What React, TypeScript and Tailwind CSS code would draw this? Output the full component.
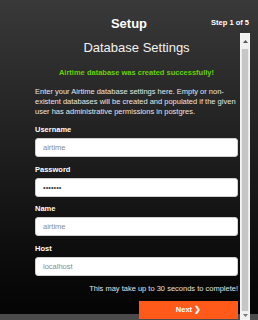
import React from "react";

const fields = [
  { label: "Username", type: "text", placeholder: "airtime" },
  { label: "Password", type: "password", value: "airtime" },
  { label: "Name", type: "text", placeholder: "airtime" },
  { label: "Host", type: "text", placeholder: "localhost" },
];

export default function App() {
  return (
    <div className="relative w-[258px] h-[320px] overflow-hidden bg-gradient-to-b from-[#393939] via-[#1d1d1d] to-[#040404] font-['Liberation_Sans',Arial,sans-serif] text-white">
      {/* page footer strip behind the dialog */}
      <div className="absolute inset-x-0 bottom-0 h-[6px] bg-[#4b4b4b]" />

      {/* header */}
      <div className="relative h-[33px] pt-[15.5px]">
        <div className="grid grid-cols-[1fr_auto_1fr] items-center">
          <div />
          <h1 className="text-[13px] leading-[15px] font-bold">Setup</h1>
          <div className="flex justify-end pr-[9px]">
            <span className="text-[7.5px] leading-[10px] font-bold">Step 1 of 5</span>
          </div>
        </div>
      </div>

      <div className="relative flex h-[287px]">
        {/* scrolling content */}
        <div className="w-[240px] pl-[35px] pr-[2px] overflow-hidden">
          <h2 className="pt-[6.5px] text-center text-[13px] leading-[16px] text-[#f2f2f2]">
            Database Settings
          </h2>
          <p className="mt-[12.5px] text-center text-[7.5px] leading-[10px] font-bold text-[#66d000]">
            Airtime database was created successfully!
          </p>
          <p className="mt-[9px] text-[7.5px] leading-[10px] text-[#e6e6e6]">
            Enter your Airtime database settings here. Empty or non-existent databases will be created and
            populated if the given user has administrative permissions in postgres.
          </p>

          <div className="mt-[8px] flex flex-col gap-[7.5px]">
            {fields.map((f) => (
              <label key={f.label} className="flex flex-col">
                <span className="mb-[3px] text-[7.5px] leading-[10px] font-bold">{f.label}</span>
                <input
                  type={f.type}
                  placeholder={f.placeholder}
                  defaultValue={f.value}
                  className="h-[19px] w-full rounded-[3px] border border-[#d0d0d0] bg-white px-[7px] text-[7.5px] text-[#444] placeholder:text-[#8c8c8c] outline-none"
                />
              </label>
            ))}
          </div>

          <p className="mt-[8px] text-right text-[7.5px] leading-[10px] text-[#e0e0e0]">
            This may take up to 30 seconds to complete!
          </p>
          <div className="mt-[7px] flex justify-end">
            <button className="h-[18px] w-[99px] bg-[#ff5a1a] text-[7.5px] font-bold text-white">
              Next ❯
            </button>
          </div>
        </div>

        {/* scrollbar */}
        <div className="flex h-full w-[10px] flex-col border border-[#f4f4f4] bg-[#f0f0f0]">
          <div className="flex h-[15px] items-center justify-center">
            <svg width="5" height="3" viewBox="0 0 5 3">
              <path d="M0 3 L2.5 0 L5 3 Z" fill="#555" />
            </svg>
          </div>
          <div className="flex-1 border-x border-[#eaeaea] bg-[#c6c6c6]" />
          <div className="flex h-[8px] items-center justify-center">
            <svg width="5" height="3" viewBox="0 0 5 3">
              <path d="M0 0 L2.5 3 L5 0 Z" fill="#777" />
            </svg>
          </div>
        </div>
      </div>
    </div>
  );
}
